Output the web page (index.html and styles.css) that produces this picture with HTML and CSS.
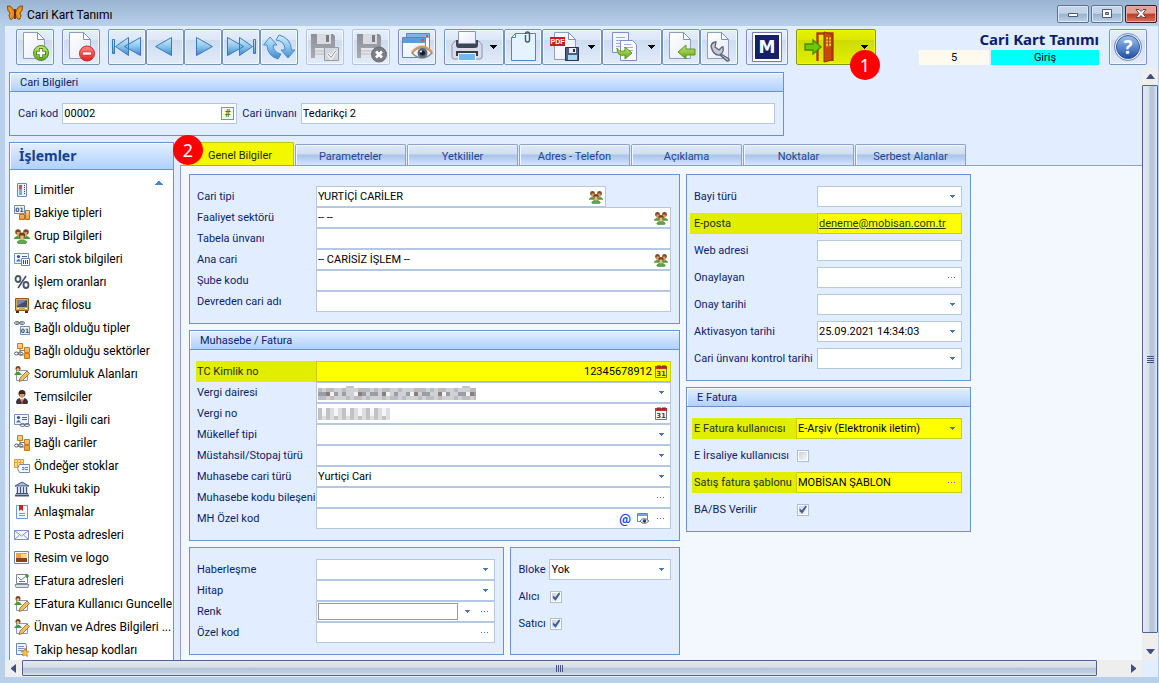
FILE: index.html
```html
<!DOCTYPE html>
<html lang="tr">
<head>
<meta charset="utf-8">
<title>Cari Kart Tanımı</title>
<link rel="stylesheet" href="styles.css">
</head>
<body>
<svg class="defs" aria-hidden="true">
  <defs>
    <linearGradient id="gBlue" x1="0" y1="0" x2="0" y2="1"><stop offset="0" stop-color="#d3eefc"/><stop offset=".5" stop-color="#8cc5ec"/><stop offset="1" stop-color="#3f86cc"/></linearGradient>
    <linearGradient id="gPage" x1="0" y1="0" x2="1" y2="1"><stop offset="0" stop-color="#ffffff"/><stop offset="1" stop-color="#e6ebf8"/></linearGradient>
    <linearGradient id="gGreen" x1="0" y1="0" x2="0" y2="1"><stop offset="0" stop-color="#c4e86a"/><stop offset="1" stop-color="#5fa51d"/></linearGradient>
    <linearGradient id="gRed" x1="0" y1="0" x2="0" y2="1"><stop offset="0" stop-color="#ff8a86"/><stop offset="1" stop-color="#e0201f"/></linearGradient>
    <linearGradient id="gGrey" x1="0" y1="0" x2="0" y2="1"><stop offset="0" stop-color="#8d9097"/><stop offset="1" stop-color="#a9acb2"/></linearGradient>
    <linearGradient id="gHelp" x1="0" y1="0" x2="0" y2="1"><stop offset="0" stop-color="#9ec4ee"/><stop offset="1" stop-color="#1e4fa8"/></linearGradient>
    <linearGradient id="gBox" x1="0" y1="0" x2="0" y2="1"><stop offset="0" stop-color="#fdd48a"/><stop offset="1" stop-color="#e79a35"/></linearGradient>
    <symbol id="page" viewBox="0 0 32 32"><path d="M4.500 1.500h14l7 7v19h-21z" fill="url(#gPage)" stroke="#8f9cc4"/><path d="M18.500 1.500v7h7z" fill="#fff" stroke="#7f8fc0"/></symbol>
    <symbol id="floppy" viewBox="0 0 32 32"><path d="M2 3h22l2 2v22H2z" fill="url(#gGrey)"/><path d="M8 3h14v10H8z" fill="#d9dbe0"/><path d="M17 4h3v7h-3z" fill="#777a82"/><path d="M6 17h16v10H6z" fill="#e3e5e9"/><path d="M6 20h16M6 23h16" stroke="#b8bbc2"/></symbol>
    <symbol id="people" viewBox="0 0 16 16"><path d="M0 10q3.500-4 7 0v1H0zM9 10q3.500-4 7 0v1H9z" fill="#4d9a3b"/><path d="M3 14q5-5 10 0l-1 1.500H4z" fill="#58a846" stroke="#3a7d2c" stroke-width=".6"/><circle cx="4" cy="4" r="2.800" fill="#7b4a1e"/><path d="M2.800 4h3v3.500l-1.500 1-1.500-1z" fill="#d99a62"/><circle cx="12" cy="4" r="2.800" fill="#7b4a1e"/><path d="M10.200 4h3v3.500l-1.500 1-1.500-1z" fill="#d99a62"/><circle cx="8" cy="7.500" r="3" fill="#704218"/><path d="M6.300 7.500h3.400v3L8 12.500l-1.700-2z" fill="#eeb880"/></symbol>
    <symbol id="cal" viewBox="0 0 12 13"><path d="M.5 3.500h11v9H.5z" fill="none" stroke="#777"/><path d="M0 1h12v3H0z" fill="#c73331"/><path d="M3 0v3M5 0v3M8 0v3M10 0v3" stroke="#6d2a24"/><text x="6" y="11" class="svg-day">31</text></symbol>
    <symbol id="down" viewBox="0 0 5 3"><path d="M0 0h5v1h-1v1h-1v1h-1v-1h-1v-1h-1z" fill="#4a76b2"/></symbol>
    <symbol id="dots" viewBox="0 0 8 2"><path d="M0 0h1v1h-1zM3 0h1v1h-1zM6 0h1v1h-1z" fill="#4a76b2"/></symbol>
    <symbol id="caret" viewBox="0 0 7 4"><path d="M0 0h7v1h-1v1h-1v1h-1v1h-1v-1h-1v-1h-1v-1h-1z" fill="#000"/></symbol>
    <symbol id="card" viewBox="0 0 16 16"><path d="M.5 2.500h14v10H.5z" fill="#f3f7ff" stroke="#7c8fbf"/><circle cx="4.500" cy="5.500" r="1.600" fill="#41506f"/><path d="M2 10.500q2.500-5 5 0z" fill="#5070b0"/><path d="M8 5.500h5M8 7.500h5" stroke="#4b5f92"/></symbol>
    <symbol id="tree" viewBox="0 0 16 16"><path d="M6 4v8h5M6 7.500h5" fill="none" stroke="#777"/><path d="M3.500 .500h5v5h-5zM10.500 4.500h5v5h-5zM10.500 10.500h5v5h-5z" fill="url(#gBox)" stroke="#c77a22"/><ellipse cx="2.500" cy="10.500" rx="2" ry="1.500" fill="none" stroke="#5b6070"/><ellipse cx="6.500" cy="10.500" rx="2.500" ry="1.500" fill="none" stroke="#5b6070"/></symbol>
    <symbol id="edit" viewBox="0 0 16 16"><path d="M2.500 4.500h11v10h-11z" fill="#f4f6ff" stroke="#8796bd"/><circle cx="4" cy="2.500" r="2.500" fill="#74441c"/><circle cx="4" cy="3.500" r="1.500" fill="#e9b57b"/><path d="M0 9q4-7 8 0z" fill="#459a37"/><path d="M13 5l2.500 2.500-7 7-3.500 1 1-3.500z" fill="#f5bd59" stroke="#8a6a2c" stroke-width=".8"/></symbol>
  </defs>
</svg>

<div class="window">
  <header class="titlebar">
    <svg class="logo" viewBox="0 0 16 16"><path d="M8 8Q5 0 .5 1q-.5 5 2.500 7-2 2 0 6 3 2 5-6zM8 8q3-8 7.500-7 .5 5-2.500 7 2 2 0 6-3 2-5-6z" fill="#ee8b12" stroke="#6b3c08" stroke-width=".8"/><path d="M2 3l3 5-2 5M14 3l-3 5 2 5" fill="none" stroke="#f7a52a"/><path d="M8 4v10" stroke="#432605" stroke-width="1.600"/></svg>
    <h1 class="caption">Cari Kart Tanımı</h1>
    <div class="win-buttons">
      <button class="win-btn" aria-label="Simge durumuna küçült"><svg viewBox="0 0 12 12"><path d="M1.500 5.500h9v3h-9z" fill="#fff" stroke="#4d5a6c"/></svg></button>
      <button class="win-btn" aria-label="Ekranı kapla"><svg viewBox="0 0 12 12"><path d="M1.500 1.500h9v8h-9z" fill="#fff" stroke="#4d5a6c"/><path d="M4.500 4.500h3v2h-3z" fill="#9db6d3" stroke="#4d5a6c"/></svg></button>
      <button class="win-btn close" aria-label="Kapat"><svg viewBox="0 0 12 12"><path d="M1 1.500h3l2 2 2-2h3L8 5.500l3 4H8l-2-2-2 2H1l3-4z" fill="#fff" stroke="#54474c"/></svg></button>
    </div>
  </header>

  <div class="toolbar" role="toolbar">
    <div class="group"><button class="tool" aria-label="Yeni"><svg viewBox="0 0 32 32"><use href="#page" width="32" height="32"/><circle cx="22" cy="22" r="7.500" fill="url(#gGreen)" stroke="#4b8a1c"/><path d="M22 17v10M17 22h10" stroke="#4b8a1c" stroke-width="4"/><path d="M22 18v8M18 22h8" stroke="#fff" stroke-width="2.400"/></svg></button></div>
    <div class="group"><button class="tool" aria-label="Sil"><svg viewBox="0 0 32 32"><use href="#page" width="32" height="32"/><circle cx="22" cy="22.500" r="7.500" fill="url(#gRed)" stroke="#c5272a"/><path d="M17.500 21h9v3h-9z" fill="#fff" stroke="#c5272a" stroke-width=".6"/></svg></button></div>
    <div class="group">
      <button class="tool" aria-label="İlk kayıt"><svg viewBox="0 0 32 32"><path d="M1.500 8.500h2v14h-2zM17.500 6.500v18l-13-9zM29.500 6.500v18l-16-9z" fill="url(#gBlue)" stroke="#3a78b8"/></svg></button>
      <button class="tool" aria-label="Önceki"><svg viewBox="0 0 32 32"><path d="M22.500 6.500v18l-16-9z" fill="url(#gBlue)" stroke="#3a78b8"/></svg></button>
      <button class="tool" aria-label="Sonraki"><svg viewBox="0 0 32 32"><path d="M9.500 6.500v18l16-9z" fill="url(#gBlue)" stroke="#3a78b8"/></svg></button>
      <button class="tool" aria-label="Son kayıt"><svg viewBox="0 0 32 32"><path d="M2.500 6.500v18l16-9zM14.500 6.500v18l13-9zM28.500 8.500h2v14h-2z" fill="url(#gBlue)" stroke="#3a78b8"/></svg></button>
      <button class="tool" aria-label="Yenile"><svg viewBox="0 0 32 32"><path d="M7 6l7 8h-4q0 7 8 9l-3 5Q4.500 25 4 14H.5zM25 27l7-8h-3.500Q28 7 16 4l-3 5q9 1 9 10h-4z" fill="url(#gBlue)" stroke="#4b8cc6"/></svg></button>
    </div>
    <div class="group"><button class="tool off" disabled aria-label="Kaydet"><svg viewBox="0 0 32 32"><use href="#floppy" width="32" height="32"/><path d="M15.500 16.500h14v13h-14z" fill="#d4d7dd" stroke="#979aa2"/><path d="M19 23l3 3.500 5-7" fill="none" stroke="#fff" stroke-width="3"/><path d="M19 23l3 3.500 5-7" fill="none" stroke="#85888f"/></svg></button></div>
    <div class="group"><button class="tool off" disabled aria-label="Kaydet ve kapat"><svg viewBox="0 0 32 32"><use href="#floppy" width="32" height="32"/><circle cx="24" cy="23.500" r="7.500" fill="#7a7d85" stroke="#666a72"/><path d="M21 20.500l6 6M27 20.500l-6 6" stroke="#fff" stroke-width="2.800"/></svg></button></div>
    <div class="group"><button class="tool" aria-label="Önizleme"><svg viewBox="0 0 32 32"><path d="M5.500 2.500h23v20h-23z" fill="#fff" stroke="#6484b4"/><path d="M6 3h22v4H6z" fill="#7db3e6"/><path d="M1.500 6.500h23v20h-23z" fill="url(#gPage)" stroke="#6484b4"/><path d="M2 7h22v5H2z" fill="#5c9bdc"/><path d="M20 8h3v2h-3zM25 4h2v2h-2z" fill="#e84b3a"/><path d="M11 22q10-11 20 0-10 10-20 0z" fill="#f5f5f8" stroke="#848894" stroke-width="1.400"/><path d="M11 21q10-11 20 0" fill="none" stroke="#dd9d54" stroke-width="2"/><circle cx="21.500" cy="22" r="5" fill="#58687d"/><circle cx="21.500" cy="22" r="2.500" fill="#151c2b"/><circle cx="20" cy="20.500" r="1" fill="#fff"/></svg></button></div>
    <div class="group">
      <button class="tool split" aria-label="Yazdır"><svg viewBox="0 0 32 32"><path d="M4 10h24l3 4v12q0 2-2 2H3q-2 0-2-2V14z" fill="#d8dde9" stroke="#8a93ac"/><path d="M5 9h22v5q0 3-3 3H8q-3 0-3-3z" fill="#3d4453"/><path d="M7.500 .500h17v12h-17z" fill="url(#gPage)" stroke="#8b96b5"/><path d="M5 20h22v5H5z" fill="#353c4c"/><path d="M7.500 22.500h17v7h-17z" fill="#75b8ea" stroke="#e8f4ff"/></svg><svg class="caret"><use href="#caret"/></svg></button>
      <button class="tool" aria-label="Ekler"><svg viewBox="0 0 32 32"><path d="M8.500 2.500h20v27h-24v-23z" fill="#e5f3ff" stroke="#4f87c6"/><path d="M8.500 2.500v4h-4z" fill="#fff" stroke="#4f87c6"/><path d="M18.500 4v5q0 2 2 2t2-2V3q0-2-2-2t-2 2" fill="none" stroke="#4c5568" stroke-width="1.400"/></svg></button>
      <button class="tool split" aria-label="PDF kaydet"><svg viewBox="0 0 32 32"><path d="M5.500 1.500h14l7 7v20h-21z" fill="url(#gPage)" stroke="#8f9cc4"/><path d="M19.500 1.500v7h7z" fill="#fff" stroke="#7f8fc0"/><path d="M1 6h15v9H1z" fill="#c6201e"/><text x="8.500" y="13" class="svg-pdf">PDF</text><path d="M16.500 16.500h13v13h-13z" fill="#4f5e7c" stroke="#28324b"/><path d="M20 17h7v5h-7z" fill="#e8edf5"/><path d="M24 18h2v3h-2z" fill="#29334b"/><path d="M19 24h9v5h-9z" fill="#a9d4f4"/></svg><svg class="caret"><use href="#caret"/></svg></button>
      <button class="tool split" aria-label="Kopyala"><svg viewBox="0 0 32 32"><path d="M3.500 1.500h16v20h-16z" fill="#f4f6ff" stroke="#7f8fc0"/><path d="M7 6.500h9M7 9.500h9M7 12.500h9M7 15.500h9" stroke="#9fadd2"/><path d="M11.500 9.500h12l4 4v16h-16z" fill="#fafbff" stroke="#7f8fc0"/><path d="M15 13.500h7M15 16.500h9M15 19.500h9" stroke="#9fadd2"/><path d="M8 17q1 4 8 3v-4l7 6-7 6v-4Q8 26 8 17z" fill="url(#gGreen)" stroke="#5d9427"/></svg><svg class="caret"><use href="#caret"/></svg></button>
      <button class="tool" aria-label="Aktar"><svg viewBox="0 0 32 32"><use href="#page" width="32" height="32"/><path d="M13 21l8-7v4h9v6h-9v4z" fill="url(#gGreen)" stroke="#5d9427"/></svg></button>
      <button class="tool" aria-label="Ayarlar"><svg viewBox="0 0 32 32"><use href="#page" width="32" height="32"/><path d="M8 15q1-4 5-4l-1 5 4 3 3-3 1 0q1 5-2 7l8 5q1 2-2 2l-7-6q-7 1-9-9z" fill="#c5cad6" stroke="#5b6375" stroke-width="1.300"/></svg></button>
    </div>
    <div class="group"><button class="tool wide" aria-label="M"><svg class="m-logo" viewBox="0 0 30 30"><path d="M.5.500h29v29H.5z" fill="#fff" stroke="#777aa0"/><path d="M3 3h24v24H3z" fill="#161f68"/><text x="15" y="21" class="svg-m">M</text></svg></button></div>
    <div class="group exit"><button class="tool exit-btn" aria-label="Çıkış"><svg viewBox="0 0 32 32"><path d="M13.500 30V2.500h15V30" fill="none" stroke="#b33b12" stroke-width="2.400"/><path d="M20 1l8 2v26l-8 2z" fill="#c9480c" stroke="#93300c"/><path d="M22 6l5 .5V15l-5 .5z" fill="#e0c220"/><path d="M24.500 6v9M22 9h5M22 12h5" stroke="#b9480c"/><path d="M1 13h8V9l8 7-8 7v-4H1z" fill="#6fc800" stroke="#4b8d09" stroke-width="1.400"/></svg><svg class="caret"><use href="#caret"/></svg></button><span class="badge badge-exit">1</span></div>
    <div class="info">
      <strong class="info-title">Cari Kart Tanımı</strong>
      <div class="info-row"><span class="info-no">5</span><span class="info-state">Giriş</span></div>
    </div>
    <button class="tool help" aria-label="Yardım"><svg viewBox="0 0 32 32"><circle cx="16" cy="16" r="13.500" fill="#eef3fb" stroke="#7485aa"/><circle cx="16" cy="16" r="11.500" fill="url(#gHelp)" stroke="#2d57a2"/><text x="16" y="23" class="svg-help">?</text></svg></button>
  </div>

  <div class="viewport">
    <div class="content">
      <section class="panel head-panel">
        <h2 class="panel-title">Cari Bilgileri</h2>
        <div class="head-fields">
          <label for="kod">Cari kod</label>
          <div class="box kod-box"><input id="kod" value="00002"><button class="hash" aria-label="Numara">#</button></div>
          <label for="unvan">Cari ünvanı</label>
          <div class="box unvan-box"><input id="unvan" value="Tedarikçi 2"></div>
        </div>
      </section>

      <div class="columns">
        <nav class="sidebar">
          <h2 class="side-title">İşlemler</h2>
          <svg class="side-up" viewBox="0 0 8 4"><path d="M3 0h2v1h1v1h1v1h1v1H0V3h1V2h1V1h1z" fill="#4a86ca"/></svg>
          <ul class="side-list">
            <li><a href="#"><svg viewBox="0 0 16 16"><path d="M3.500 1.500h9v13h-9z" fill="#e9effb" stroke="#7789b2"/><path d="M5 3h3v4H5z" fill="#e44b35"/><path d="M5 7h3v6H5z" fill="#6fb1ea"/><path d="M10 3.500h1M10 5.500h1M10 7.500h1M10 9.500h1M10 11.500h1" stroke="#444"/></svg>Limitler</a></li>
            <li><a href="#"><svg viewBox="0 0 16 16"><path d="M.5 .500h10v8H.5z" fill="#eef2fc" stroke="#7789b2"/><text x="5.500" y="7" class="svg-num">01</text><path d="M5.500 9.500h5v5h-5zM11.500 5.500h4v9h-4z" fill="url(#gBox)" stroke="#b9702a"/></svg>Bakiye tipleri</a></li>
            <li><a href="#"><svg><use href="#people"/></svg>Grup Bilgileri</a></li>
            <li><a href="#"><svg viewBox="0 0 16 16"><use href="#card" width="16" height="16"/><path d="M7.500 7.500h8v7h-8z" fill="#fff" stroke="#6f83b5"/><path d="M9.500 9v4M11.500 9v4M13.500 9v4" stroke="#39496e"/></svg>Cari stok bilgileri</a></li>
            <li><a href="#"><svg viewBox="0 0 16 16"><ellipse cx="4" cy="5" rx="2.500" ry="3" fill="none" stroke="#44516a" stroke-width="1.800"/><ellipse cx="12" cy="11" rx="2.500" ry="3" fill="none" stroke="#44516a" stroke-width="1.800"/><path d="M12 2L4 14" stroke="#44516a" stroke-width="1.600"/></svg>İşlem oranları</a></li>
            <li><a href="#"><svg viewBox="0 0 16 16"><path d="M1.500 1.500h13v12h-13z" fill="#f2a436" stroke="#9f5b14"/><path d="M3 3h10v7H3z" fill="#46506a"/><path d="M3 3h10L3 9z" fill="#7888a8"/><path d="M2 14h3v2H2zM11 14h3v2h-3z" fill="#333"/><path d="M3 11h2v1H3zM11 11h2v1h-2z" fill="#fff"/></svg>Araç filosu</a></li>
            <li><a href="#"><svg viewBox="0 0 16 16"><g fill="none" stroke="#5b6a80"><ellipse cx="3" cy="3" rx="2.500" ry="1.500"/><ellipse cx="8" cy="3" rx="2.500" ry="1.500"/><path d="M2 3h7"/></g><path d="M6.500 6.500h9v8h-9z" fill="#eef2fc" stroke="#7789b2"/><text x="11" y="13" class="svg-num">01</text></svg>Bağlı olduğu tipler</a></li>
            <li><a href="#"><svg><use href="#tree"/></svg>Bağlı olduğu sektörler</a></li>
            <li><a href="#"><svg><use href="#edit"/></svg>Sorumluluk Alanları</a></li>
            <li><a href="#"><svg viewBox="0 0 16 16"><path d="M2 14q0-5 5-5h2q5 0 5 5l-1 1H3z" fill="#343640"/><path d="M6 9h4l-2 6z" fill="#fff"/><path d="M7.500 10h1l.5 4-1 1-1-1z" fill="#d33429"/><circle cx="8" cy="4.500" r="3.500" fill="#3b2618"/><path d="M5.500 5h5q0 4-2.500 4T5.500 5z" fill="#d99768"/></svg>Temsilciler</a></li>
            <li><a href="#"><svg viewBox="0 0 16 16"><use href="#card" width="16" height="16"/><g fill="none" stroke="#5b6a80"><ellipse cx="8.500" cy="13" rx="2.500" ry="1.500"/><ellipse cx="13" cy="13" rx="2.500" ry="1.500"/></g></svg>Bayi - İlgili cari</a></li>
            <li><a href="#"><svg><use href="#tree"/></svg>Bağlı cariler</a></li>
            <li><a href="#"><svg viewBox="0 0 16 16"><path d="M.5 1.500h9v8h-9z" fill="#ffd98c" stroke="#e09b33"/><path d="M.5 4.500h9M3.500 1.500v8M6.500 1.500v8" stroke="#e9a845"/><path d="M5.500 6.500h10v8h-10l-2-4z" fill="#f4f7ff" stroke="#7789b2"/><path d="M8 9.500h2v2H8M11 9.500h3M11 11.500h3" fill="none" stroke="#6a7ca6"/></svg>Öndeğer stoklar</a></li>
            <li><a href="#"><svg viewBox="0 0 16 16"><path d="M1 5l7-4 7 4z" fill="#a9bedc" stroke="#3d5680"/><path d="M1 14.500h14" stroke="#3d5680" stroke-width="2"/><path d="M3.500 6v7M6.500 6v7M9.500 6v7M12.500 6v7" stroke="#3d5680" stroke-width="1.400"/><path d="M2 12.500h12" stroke="#3d5680"/></svg>Hukuki takip</a></li>
            <li><a href="#"><svg viewBox="0 0 16 16"><path d="M2.500 1.500h11v13h-11z" fill="#f5f9ff" stroke="#6b9bd2"/><path d="M5 1h4v6L7 5.500 5 7z" fill="#c0272d"/><path d="M5 9.500h6M5 11.500h6" stroke="#6b9bd2"/></svg>Anlaşmalar</a></li>
            <li><a href="#"><svg viewBox="0 0 16 16"><path d="M.5 3.500h14v9H.5z" fill="#f5f7ff" stroke="#8090c4"/><path d="M.5 3.500L7.500 9l7-5.500M.5 12.500L5.500 8M14.500 12.500L9.500 8" fill="none" stroke="#8090c4"/></svg>E Posta adresleri</a></li>
            <li><a href="#"><svg viewBox="0 0 16 16"><path d="M.5 1.500h14v12H.5z" fill="#fff" stroke="#7484a8"/><path d="M2 3h11v9H2z" fill="#f2a33c"/><path d="M2 8h11v4H2z" fill="#8b4119"/><path d="M7 4h6v4H7z" fill="#ffd98a"/></svg>Resim ve logo</a></li>
            <li><a href="#"><svg viewBox="0 0 16 16"><path d="M2.500 1.500h11v9h-11z" fill="#fff" stroke="#7d8794"/><path d="M1 11.500h14l-1 3H2z" fill="#dfe3e9" stroke="#858d99"/><path d="M4 4l3 3 4-3M5 8.500h6" fill="none" stroke="#6d7c8c"/><path d="M11 3h4M13 1v4" stroke="#379a44" stroke-width="1.600"/></svg>EFatura adresleri</a></li>
            <li><a href="#"><svg><use href="#edit"/></svg>EFatura Kullanıcı Guncelle</a></li>
            <li><a href="#"><svg><use href="#edit"/></svg>Ünvan ve Adres Bilgileri ...</a></li>
            <li><a href="#"><svg viewBox="0 0 16 16"><path d="M2.500 1.500h9l1 2v9h-10z" fill="#edf2fc" stroke="#7183b0"/><path d="M4 4.500h6M4 6.500h6M4 8.500h6" stroke="#7f93c0"/><path d="M11 6l1 3 3 .5-2 2 .5 3-2.500-1.500L8.500 14l.5-2.500-2-2 3-.5z" fill="#fbc044" stroke="#c9791e" stroke-width=".7"/></svg>Takip hesap kodları</a></li>
          </ul>
        </nav>

        <main class="tabs">
          <span class="badge badge-tab">2</span>
          <div class="tab-strip" role="tablist">
            <button class="tab active" role="tab" aria-selected="true">Genel Bilgiler</button>
            <button class="tab" role="tab">Parametreler</button>
            <button class="tab" role="tab">Yetkililer</button>
            <button class="tab" role="tab">Adres - Telefon</button>
            <button class="tab" role="tab">Açıklama</button>
            <button class="tab" role="tab">Noktalar</button>
            <button class="tab" role="tab">Serbest Alanlar</button>
          </div>
          <div class="tab-page">
            <div class="col">
              <section class="panel">
                <div class="rows">
                  <div class="row"><label for="a1">Cari tipi</label><div class="box short"><input id="a1" value="YURTİÇİ CARİLER"><button class="ic" aria-label="Seç"><svg class="i14"><use href="#people"/></svg></button></div></div>
                  <div class="row"><label for="a2">Faaliyet sektörü</label><div class="box"><input id="a2" value="-- --"><button class="ic" aria-label="Seç"><svg class="i14"><use href="#people"/></svg></button></div></div>
                  <div class="row"><label for="a3">Tabela ünvanı</label><div class="box"><input id="a3"></div></div>
                  <div class="row"><label for="a4">Ana cari</label><div class="box"><input id="a4" value="-- CARİSİZ İŞLEM --"><button class="ic" aria-label="Seç"><svg class="i14"><use href="#people"/></svg></button></div></div>
                  <div class="row"><label for="a5">Şube kodu</label><div class="box"><input id="a5"></div></div>
                  <div class="row"><label for="a6">Devreden cari adı</label><div class="box"><input id="a6"></div></div>
                </div>
              </section>

              <section class="panel">
                <h2 class="panel-title">Muhasebe / Fatura</h2>
                <div class="rows">
                  <div class="row marked"><label for="b1">TC Kimlik no</label><div class="box"><input id="b1" class="right" value="12345678912"><button class="ic" aria-label="Takvim"><svg class="i-cal"><use href="#cal"/></svg></button></div></div>
                  <div class="row"><label for="b2">Vergi dairesi</label><div class="box"><svg class="mosaic-a" viewBox="0 0 158 14" shape-rendering="crispEdges" aria-hidden="true"><path d="M0 8h158" stroke="#cfd1d5" stroke-width="12"/><path d="M0 4h158" stroke="#b9bbc0" stroke-width="4" stroke-dasharray="4 4 8 8 4 12 12 4"/><path d="M0 8h158" stroke="#9b9ca6" stroke-width="4" stroke-dasharray="8 8 4 4 4 8 12 4"/><path d="M8 8h150" stroke="#8a7f7c" stroke-width="4" stroke-dasharray="4 28 4 20"/><path d="M12 8h146" stroke="#f4f2ea" stroke-width="4" stroke-dasharray="4 20 4 28"/><path d="M0 12h158" stroke="#bcbdc4" stroke-width="4" stroke-dasharray="8 4 4 12 4 4"/><path d="M28 1h8M144 1h8" stroke="#c4c6ca" stroke-width="2"/></svg><select id="b2"><option></option></select><svg class="dn"><use href="#down"/></svg></div></div>
                  <div class="row"><label for="b3">Vergi no</label><div class="box"><svg class="mosaic-b" viewBox="0 0 72 12" shape-rendering="crispEdges" aria-hidden="true"><path d="M0 6h72" stroke="#dcdedf" stroke-width="12"/><path d="M0 6h72" stroke="#c4c1c5" stroke-width="12" stroke-dasharray="4 4"/><path d="M4 2h68" stroke="#f6f8f8" stroke-width="4" stroke-dasharray="4 8"/><path d="M4 6h68" stroke="#eef8f7" stroke-width="4" stroke-dasharray="4 8"/></svg><input id="b3"><button class="ic" aria-label="Takvim"><svg class="i-cal"><use href="#cal"/></svg></button></div></div>
                  <div class="row"><label for="b4">Mükellef tipi</label><div class="box"><select id="b4"><option></option></select><svg class="dn"><use href="#down"/></svg></div></div>
                  <div class="row"><label for="b5">Müstahsil/Stopaj türü</label><div class="box"><select id="b5"><option></option></select><svg class="dn"><use href="#down"/></svg></div></div>
                  <div class="row"><label for="b6">Muhasebe cari türü</label><div class="box"><select id="b6"><option>Yurtiçi Cari</option></select><svg class="dn"><use href="#down"/></svg></div></div>
                  <div class="row"><label for="b7">Muhasebe kodu bileşeni</label><div class="box"><input id="b7"><button class="ic" aria-label="Diğer"><svg class="dots"><use href="#dots"/></svg></button></div></div>
                  <div class="row"><label for="b8">MH Özel kod</label><div class="box"><input id="b8"><button class="ic at" aria-label="E-posta">@</button><button class="ic" aria-label="Göster"><svg class="i-eye" viewBox="0 0 12 11"><path d="M.5.500h10v8H.5z" fill="#fff" stroke="#6789b7"/><path d="M1 1h9v2H1z" fill="#6ba3dc"/><path d="M3 8q4-5 9 0-5 5-9 0z" fill="#dfe3ea" stroke="#596272" stroke-width=".8"/><circle cx="7.500" cy="8" r="1.700" fill="#39445a"/></svg></button><button class="ic" aria-label="Diğer"><svg class="dots"><use href="#dots"/></svg></button></div></div>
                </div>
              </section>

              <div class="pair">
                <section class="panel pair-a">
                  <div class="rows">
                    <div class="row"><label for="c1">Haberleşme</label><div class="box"><select id="c1"><option></option></select><svg class="dn"><use href="#down"/></svg></div></div>
                    <div class="row"><label for="c2">Hitap</label><div class="box"><select id="c2"><option></option></select><svg class="dn"><use href="#down"/></svg></div></div>
                    <div class="row"><label for="c3">Renk</label><div class="box colour"><input id="c3"><button class="ic" aria-label="Aç"><svg class="dn-s"><use href="#down"/></svg></button><button class="ic" aria-label="Diğer"><svg class="dots"><use href="#dots"/></svg></button></div></div>
                    <div class="row"><label for="c4">Özel kod</label><div class="box"><input id="c4"><button class="ic" aria-label="Diğer"><svg class="dots"><use href="#dots"/></svg></button></div></div>
                  </div>
                </section>
                <section class="panel pair-b">
                  <div class="rows spaced narrow">
                    <div class="row"><label for="d1">Bloke</label><div class="box"><select id="d1"><option>Yok</option></select><svg class="dn"><use href="#down"/></svg></div></div>
                    <div class="row"><label for="d2">Alıcı</label><input type="checkbox" id="d2" checked></div>
                    <div class="row"><label for="d3">Satıcı</label><input type="checkbox" id="d3" checked></div>
                  </div>
                </section>
              </div>
            </div>

            <div class="col">
              <section class="panel">
                <div class="rows spaced contact">
                  <div class="row"><label for="e1">Bayi türü</label><div class="box"><select id="e1"><option></option></select><svg class="dn"><use href="#down"/></svg></div></div>
                  <div class="row marked"><label for="e2">E-posta</label><div class="box"><input id="e2" class="mail" value="deneme@mobisan.com.tr"></div></div>
                  <div class="row"><label for="e3">Web adresi</label><div class="box"><input id="e3"></div></div>
                  <div class="row"><label for="e4">Onaylayan</label><div class="box"><input id="e4"><button class="ic" aria-label="Diğer"><svg class="dots"><use href="#dots"/></svg></button></div></div>
                  <div class="row"><label for="e5">Onay tarihi</label><div class="box"><select id="e5"><option></option></select><svg class="dn"><use href="#down"/></svg></div></div>
                  <div class="row"><label for="e6">Aktivasyon tarihi</label><div class="box"><select id="e6"><option>25.09.2021 14:34:03</option></select><svg class="dn"><use href="#down"/></svg></div></div>
                  <div class="row"><label for="e7">Cari ünvanı kontrol tarihi</label><div class="box"><select id="e7"><option></option></select><svg class="dn"><use href="#down"/></svg></div></div>
                </div>
              </section>
              <section class="panel">
                <h2 class="panel-title">E Fatura</h2>
                <div class="rows spaced invoice">
                  <div class="row marked"><label for="f1">E Fatura kullanıcısı</label><div class="box"><select id="f1"><option>E-Arşiv (Elektronik iletim)</option></select><svg class="dn"><use href="#down"/></svg></div></div>
                  <div class="row"><label for="f2">E İrsaliye kullanıcısı</label><input type="checkbox" id="f2"></div>
                  <div class="row marked"><label for="f3">Satış fatura şablonu</label><div class="box"><input id="f3" value="MOBİSAN ŞABLON"><button class="ic" aria-label="Diğer"><svg class="dots"><use href="#dots"/></svg></button></div></div>
                  <div class="row"><label for="f4">BA/BS Verilir</label><input type="checkbox" id="f4" checked></div>
                </div>
              </section>
            </div>
          </div>
        </main>
      </div>
    </div>

    <div class="scroll vscroll" role="scrollbar" aria-orientation="vertical" aria-valuenow="0">
      <span class="arrow"><svg viewBox="0 0 9 5"><path d="M4 0h1l4 5H0z" fill="#3f4f80"/></svg></span>
      <span class="thumb"><i></i><i></i><i></i><i></i></span>
      <span class="arrow last"><svg viewBox="0 0 9 5"><path d="M0 0h9L5 5H4z" fill="#3f4f80"/></svg></span>
    </div>
    <div class="scroll hscroll" role="scrollbar" aria-orientation="horizontal" aria-valuenow="0">
      <span class="arrow"><svg viewBox="0 0 5 9"><path d="M0 4v1l5 4V0z" fill="#3f4f80"/></svg></span>
      <span class="thumb"><i></i><i></i><i></i><i></i></span>
      <span class="arrow last"><svg viewBox="0 0 5 9"><path d="M0 0v9l5-4V4z" fill="#3f4f80"/></svg></span>
    </div>
  </div>
</div>
</body>
</html>
```

FILE: styles.css
```css
* { box-sizing: border-box; }

body {
  margin: 0;
  font: 11px/14px Roboto, "Liberation Sans", sans-serif;
  color: #0c1d6b;
  background: #b9d0ea;
}

button, input, select {
  font: inherit;
  color: inherit;
  margin: 0;
  padding: 0;
  border: 0;
  background: none;
}

h1, h2, ul { margin: 0; padding: 0; font-weight: normal; }
svg { display: block; }
.defs { position: absolute; width: 0; height: 0; }

.svg-day { font: bold 7px "DejaVu Sans", sans-serif; text-anchor: middle; fill: #444; }
.svg-num { font: bold 6px "DejaVu Sans", sans-serif; text-anchor: middle; fill: #3c4c74; }
.svg-pdf { font: bold 7px "Liberation Sans", sans-serif; text-anchor: middle; fill: #fff; }
.svg-m { font: bold 17px "DejaVu Sans", sans-serif; text-anchor: middle; fill: #fff; }
.svg-help { font: bold 19px "Noto Sans", sans-serif; text-anchor: middle; fill: #fff; }

.window {
  display: flex;
  flex-direction: column;
  min-height: 100vh;
  padding: 0 1px 6px 5px;
}

/* Title bar */
.titlebar {
  display: flex;
  align-items: center;
  height: 26px;
  margin: 0 -1px 0 -5px;
  padding: 0 2px 0 7px;
  background: linear-gradient(#99b3d1, #b9d0e9);
}
.logo { width: 16px; height: 16px; margin-right: 4px; }
.caption { flex: 1; padding-top: 3px; font-size: 12px; line-height: 16px; color: #000; }
.win-buttons { display: flex; gap: 2px; padding-top: 2px; }
.win-btn {
  display: grid;
  place-items: center;
  width: 32px;
  height: 18px;
  border: 1px solid #5c7290;
  border-radius: 2px;
  box-shadow: inset 0 0 0 1px #dce8f5;
  background: linear-gradient(#c4d5e9 45%, #98b2cf 50%, #bdd2e8);
}
.win-btn svg { width: 12px; height: 12px; }
.win-btn.close {
  border-color: #471524;
  box-shadow: inset 0 0 0 1px #e8b0a3;
  background: linear-gradient(#e2a294 45%, #b93a23 50%, #d4745c);
}

/* Toolbar */
.toolbar {
  display: flex;
  gap: 8px;
  padding: 3px 11px 3px 11px;
  background: #e2eeff;
}
.group { display: flex; }
.tool {
  display: flex;
  align-items: center;
  justify-content: center;
  gap: 7px;
  width: 38px;
  height: 36px;
  border: 1px solid #7393c1;
  border-radius: 2px;
  box-shadow: inset 0 0 0 1px #f3f8fe;
  background: linear-gradient(#e6effb, #dde8f6 28%, #cddcf0 30%, #e2ecf9);
}
.tool svg { width: 32px; height: 32px; flex: none; }
.tool .caret { width: 7px; height: 4px; }
.tool.off { border-color: #b4c4de; }
.tool.split { width: 60px; }
.tool.wide { width: 42px; }
.tool .m-logo { width: 30px; height: 30px; }
.exit { position: relative; }
.exit-btn {
  width: 80px;
  gap: 25px;
  border-color: #7f9b16;
  box-shadow: inset 0 0 0 1px #eff600;
  background: linear-gradient(#e8f200, #dde900 28%, #ccdc00 30%, #e2ee00);
}
.badge {
  position: absolute;
  display: grid;
  place-items: center;
  width: 30px;
  height: 30px;
  border-radius: 50%;
  font: 18px/20px "Noto Sans", sans-serif;
  color: #fff;
  background: #f00;
}
.badge-exit { left: 54px; top: 21px; }
.badge-tab { left: -7px; top: -7px; }
.info { margin-left: auto; text-align: right; }
.info-title { display: block; font: bold 15px/21px "Noto Sans", sans-serif; }
.info-row {
  display: flex;
  justify-content: flex-end;
  gap: 2px;
  text-align: center;
  line-height: 15px;
  color: #000;
}
.info-no { width: 70px; background: #fffaee; }
.info-state { width: 108px; background: #0ff; }
.help { margin-left: 2px; }

/* Content and its scroll bars */
.viewport {
  flex: 1;
  display: grid;
  grid-template: 1fr 17px / minmax(0, 1fr) 16px;
  background: #e2eeff;
}
.content { display: flex; flex-direction: column; gap: 6px; padding: 4px 0 0 4px; }
.scroll { display: flex; background: #eee; }
.vscroll { flex-direction: column; }
.scroll .arrow { display: grid; place-items: center; flex: 0 0 17px; }
.vscroll svg { width: 9px; height: 5px; }
.hscroll svg { width: 5px; height: 9px; }
.thumb {
  flex: 1;
  display: flex;
  align-items: center;
  justify-content: center;
  gap: 1px;
  border: 1px solid #52618f;
  border-radius: 1px;
}
.vscroll .thumb {
  flex-direction: column;
  margin-bottom: 10px;
  background: linear-gradient(90deg, #e4eaf1, #d5dee9 45%, #b4c4d8 50%, #bdcbde 80%, #e0e8f3);
}
.hscroll .thumb {
  margin: 0 28px 1px 0;
  background: linear-gradient(#e4e8ef, #d5dee9 45%, #b4c4d8 50%, #bdcbde 80%, #e0e8f3);
}
.thumb i { background: #46527e; }
.vscroll i { width: 7px; height: 1px; }
.hscroll i { width: 1px; height: 7px; }

/* Panels */
.panel { border: 1px solid #6893ce; background: #e2eeff; }
.panel-title {
  height: 19px;
  padding: 1px 0 0 10px;
  border-bottom: 1px solid #6893ce;
  box-shadow: inset 1px 1px #f7fbff;
  font-size: 11px;
  line-height: 18px;
  background: linear-gradient(#e3efff, #b0d1fd);
}
.head-panel { max-width: 775px; }
.head-fields {
  display: flex;
  align-items: center;
  padding: 11px 8px;
}
.head-fields .kod-box { flex: 0 1 175px; margin: 0 5px 0 4px; }
.head-fields .unvan-box { margin-left: 4px; }
.box {
  flex: 1;
  display: flex;
  align-items: center;
  min-width: 0;
  height: 21px;
  border: 1px solid #b4c8e3;
  color: #000;
  background: #fff;
}
.box input, .box select {
  flex: 1;
  width: 0;
  min-width: 0;
  height: 19px;
  padding-left: 1px;
  appearance: none;
  outline: 0;
}
.box .right { text-align: right; }
.box .mail { text-decoration: underline; color: #1f3d10; }
.dn { width: 5px; height: 3px; margin-right: 6px; pointer-events: none; }
.dn-s { width: 5px; height: 3px; }
.ic { display: grid; place-items: center; width: 18px; height: 19px; }
.i14 { width: 14px; height: 14px; }
.i-cal { width: 12px; height: 13px; }
.i-eye { width: 12px; height: 11px; }
.dots { width: 8px; height: 2px; }
.at { font-weight: bold; font-size: 13px; color: #1c43e8; }
.hash {
  width: 13px;
  height: 13px;
  margin-right: 2px;
  border: 1px solid #7d92b3;
  font-weight: bold;
  font-size: 10px;
  line-height: 11px;
  color: #3f8b00;
  background: #f5f9ea;
}
.mosaic-a { width: 158px; height: 14px; margin-left: 1px; }
.mosaic-b { width: 72px; height: 12px; margin-left: 1px; }

.rows { display: grid; padding: 11px 8px 11px 6px; }
.row { display: grid; grid-template-columns: 120px minmax(0, 1fr); align-items: center; }
.row > label { height: 21px; padding-left: 1px; line-height: 22px; white-space: nowrap; }
.short { max-width: 290px; }
.spaced { gap: 6px; }
.narrow .row { grid-template-columns: 32px minmax(0, 1fr); }
.contact { padding-left: 3px; }
.contact .row { grid-template-columns: 127px minmax(0, 1fr); }
.contact label { padding-left: 4px; }
.invoice { padding-left: 5px; }
.invoice .row { grid-template-columns: 104px minmax(0, 1fr); }
.invoice label { padding-left: 2px; }
.marked > label { color: #1d3300; background: #e2ee00; }
.marked > .box { border-color: #c3d312; background: #ff0; }
.colour input {
  height: 17px;
  margin-left: 1px;
  border: 1px solid #999;
}

input[type="checkbox"] {
  appearance: none;
  width: 12px;
  height: 12px;
  margin-left: 1px;
  border: 1px solid #a9bfde;
  box-shadow: inset 0 0 0 1px #fff;
  background: linear-gradient(135deg, #c9ced8, #fafafa);
}
input[type="checkbox"]:checked::after {
  content: "";
  display: block;
  height: 10px;
  background: #3f5f8c;
  clip-path: polygon(15% 40%, 38% 58%, 78% 8%, 88% 22%, 42% 92%, 15% 64%);
}

/* Side menu and tabs */
.columns { flex: 1; display: flex; gap: 6px; }
.sidebar {
  position: relative;
  flex: 0 0 165px;
  min-width: 0;
  border: 1px solid #6893ce;
  border-bottom: 0;
  background: #fff;
}
.side-title {
  height: 27px;
  padding-left: 9px;
  border-bottom: 1px solid #6893ce;
  box-shadow: inset 1px 1px #f7fbff;
  font: bold 14px/26px "Noto Sans", sans-serif;
  color: #173f8f;
  background: linear-gradient(#e3efff, #b0d1fd);
}
.side-up { position: absolute; right: 10px; top: 38px; width: 8px; height: 4px; }
.side-list { padding-top: 7px; list-style: none; overflow: hidden; }
.side-list a {
  display: flex;
  align-items: center;
  gap: 4px;
  height: 23px;
  padding: 2px 0 0 4px;
  font-size: 12px;
  white-space: nowrap;
  text-decoration: none;
  color: #000;
}
.side-list svg { width: 16px; height: 16px; flex: none; }

.tabs { position: relative; flex: 1; min-width: 0; display: flex; flex-direction: column; }
.tab-strip {
  display: flex;
  align-items: flex-end;
  gap: 1px;
  height: 24px;
  padding-left: 3px;
  border-bottom: 1px solid #8ba3cc;
}
.tab {
  flex: 0 1 111px;
  height: 21px;
  padding-top: 3px;
  border: 1px solid #8ba3cc;
  border-bottom: 0;
  border-radius: 2px 2px 0 0;
  box-shadow: inset 1px 1px #f2f7fe;
  color: #1d4596;
  background: linear-gradient(#dfe9f7, #cfdef3 45%, #a9c3e9 50%, #d5e4fa);
}
.tab.active {
  height: 23px;
  padding-left: 3px;
  border-color: #b9c61a;
  box-shadow: none;
  color: #1b2c00;
  background: #f3f800;
}
.tab-page {
  flex: 1;
  display: grid;
  grid-template-columns: minmax(0, 491fr) minmax(0, 285fr) minmax(0, 165fr);
  gap: 6px;
  padding: 8px 0 5px 8px;
  border-left: 1px solid #8ba3cc;
  background: #f3f7fe;
}
.col { display: flex; flex-direction: column; gap: 6px; }
.pair { display: flex; gap: 6px; }
.pair-a { flex: 316 1 0; min-width: 0; }
.pair-b { flex: 169 1 0; min-width: 0; }
```
